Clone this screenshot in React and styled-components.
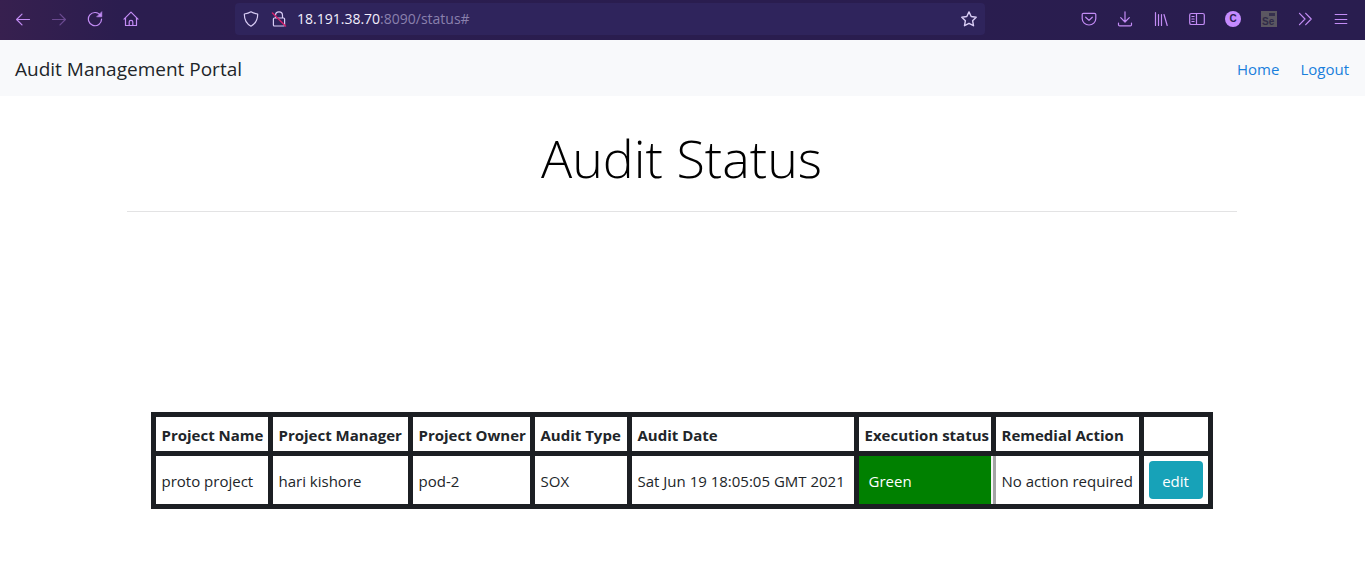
import React from "react";
import styled, { createGlobalStyle } from "styled-components";

const GlobalStyle = createGlobalStyle`
  *, *::before, *::after { box-sizing: border-box; }
  body {
    margin: 0;
    background: #fff;
    color: #212529;
    font-family: "Open Sans", "Noto Sans", sans-serif;
    font-size: 15px;
    line-height: 24px;
  }
`;

const Toolbar = styled.header`
  display: flex;
  align-items: center;
  height: 40px;
  padding: 0 6px 2px 5px;
  background: linear-gradient(90deg, #37204f 0, #2b1d4f 120px, #291d4f 100%);
`;

const ToolGroup = styled.div`
  display: flex;
  flex: none;
`;

const ToolButton = styled.button`
  display: flex;
  align-items: center;
  justify-content: center;
  width: 36px;
  height: 32px;
  padding: 0;
  border: 0;
  background: none;
  color: #c38cf5;
  opacity: ${(p) => (p.disabled ? 0.4 : 1)};
`;

const AddressBar = styled.div`
  display: flex;
  flex: 1;
  align-items: center;
  min-width: 0;
  height: 32px;
  margin: 0 86px;
  padding: 0 8px;
  border-radius: 4px;
  background: #2f245c;
  color: #d9cdf5;
`;

const AddressIcons = styled.div`
  display: flex;
  flex: none;
  gap: 12px;
  margin-right: 10px;
`;

const Host = styled.label`
  flex: none;
  color: #f3effc;
  font-size: 14px;
`;

const AddressInput = styled.input`
  flex: 1;
  min-width: 0;
  padding: 0;
  border: 0;
  outline: 0;
  background: none;
  color: #8a80ad;
  font: inherit;
  font-size: 14px;
`;

const StarButton = styled.button`
  display: flex;
  padding: 0;
  border: 0;
  background: none;
  color: inherit;
`;

const Navbar = styled.nav`
  display: flex;
  align-items: center;
  justify-content: space-between;
  height: 56px;
  padding: 2px 16px 0 15px;
  background: #f8f9fb;
`;

const Brand = styled.a`
  color: #212529;
  font-size: 19px;
  line-height: 26px;
  text-decoration: none;
`;

const NavLinks = styled.div`
  display: flex;
  gap: 21px;
`;

const NavLink = styled.a`
  color: #1a7fdc;
  text-decoration: none;
`;

const Container = styled.main`
  max-width: 1140px;
  margin: 0 auto;
  padding: 0 16px 0 14px;
`;

const Title = styled.h1`
  margin: 0;
  padding: 28px 0 20px;
  border-bottom: 1px solid #e3e3e4;
  color: #000;
  font-size: 52px;
  font-weight: 300;
  line-height: 67px;
  text-align: center;
`;

const AuditTable = styled.table`
  width: 100%;
  max-width: 1062px;
  margin: 200px auto 0;
  table-layout: fixed;
  border-collapse: separate;
  border-spacing: 5px;
  background: #1c1f23;
`;

const Column = styled.col`
  width: ${(p) => p.$width}px;
`;

const HeadCell = styled.th`
  height: 34px;
  padding: 2px 0 0 6px;
  background: #fff;
  font-weight: 700;
  text-align: left;
  white-space: nowrap;
`;

const Cell = styled.td`
  height: 48px;
  padding: 2px 0 0 6px;
  background: #fff;
  white-space: nowrap;
`;

const StatusCell = styled(Cell)`
  padding-left: 10px;
  background: #008000;
  box-shadow: 2px 0 0 #f4f4f4, 5px 0 0 #a3a3a5;
  color: #fff;
`;

const ActionCell = styled(Cell)`
  padding: 0 5px;
`;

const EditButton = styled.button`
  display: block;
  width: 100%;
  height: 38px;
  padding: 2px 0 0;
  border: 0;
  border-radius: 4px;
  background: #17a2b8;
  color: #fff;
  font: inherit;
`;

function Icon({ children, size = 16 }) {
  return (
    <svg
      width={size}
      height={size}
      viewBox="0 0 16 16"
      fill="none"
      stroke="currentColor"
      strokeWidth="1.2"
      strokeLinecap="round"
      strokeLinejoin="round"
      aria-hidden="true"
    >
      {children}
    </svg>
  );
}

const icons = {
  back: <path d="M14.500 8.500H1.600M7 3.100 1.600 8.500 7 13.900" />,
  forward: <path d="M1.500 8.500h12.900M9 3.100l5.400 5.400L9 13.900" />,
  reload: (
    <>
      <path d="M13.600 4.600A6.600 6.600 0 1 0 14.600 8" />
      <path d="M14.800 1v4.800H10z" fill="currentColor" strokeWidth="0.6" />
    </>
  ),
  home: (
    <path d="M1 8.200 8 1.200l7 7M2.500 6.800v7.700h11V6.800M6.200 14.500v-3.400a1.800 1.800 0 0 1 3.600 0v3.400" />
  ),
  shield: (
    <path d="M8 .8C6.200 2 3.800 2.700 1.300 3c0 5.600 1.800 9.600 6.700 12.200C12.900 12.600 14.700 8.600 14.700 3 12.200 2.700 9.800 2 8 .8z" />
  ),
  lock: (
    <>
      <path d="M4.500 7V4.400a3.500 3.500 0 0 1 7 0V7M3.400 7h9.200a1 1 0 0 1 1 1v6a1 1 0 0 1-1 1H3.400a1 1 0 0 1-1-1V8a1 1 0 0 1 1-1z" />
      <path d="M1.500 2 14.500 15" stroke="#d0216b" strokeWidth="1.5" />
    </>
  ),
  star: (
    <path d="m8 .9 2.200 4.600 5 .7-3.600 3.500.9 5L8 12.300l-4.500 2.400.9-5L.8 6.200l5-.7z" strokeWidth="1.4" />
  ),
  pocket: (
    <>
      <path d="M2.500 2.300h11a1.300 1.300 0 0 1 1.300 1.300V7.400a6.800 6.600 0 0 1-13.600 0V3.600a1.300 1.300 0 0 1 1.300-1.300z" />
      <path d="m4.700 6.200 3.300 3.200 3.300-3.200" />
    </>
  ),
  download: (
    <path d="M8 .8v10M3.700 6.700 8 11l4.300-4.300M1.500 12.200v1.500a1.200 1.200 0 0 0 1.200 1.200h10.600a1.200 1.200 0 0 0 1.200-1.200v-1.500" />
  ),
  library: <path d="M2.500 1.500v13M5.500 3.500v11M8.500 3.500v11M11 3.500l3.200 11" />,
  sidebar: (
    <>
      <rect x="0.700" y="2.500" width="14.600" height="11" rx="1.600" />
      <path d="M7.500 2.500v11M2.900 5.500h2.200M2.900 8h2.200M2.900 10.500h2.200" />
    </>
  ),
  more: <path d="m2.500 2.300 5.500 5.700-5.500 5.700M8.700 2.300l5.500 5.700-5.500 5.700" />,
  menu: <path d="M2.200 3.500h11.600M2.200 8.500h11.600M2.200 12.500h11.600" />,
};

const Badge = styled.span`
  width: 16px;
  height: 16px;
  border-radius: 50%;
  background: #c58bff;
  color: #291d4f;
  font: 700 10px/16px "Liberation Sans", sans-serif;
  text-align: center;
`;

const SeleniumTile = styled.span`
  width: 16px;
  height: 16px;
  padding: 6px 0 0 1px;
  background: linear-gradient(#35304d, #35304d) 8px 2px / 6px 3px no-repeat #5b5761;
  color: #302b48;
  font: 700 10px/10px "Liberation Sans", sans-serif;
  text-align: left;
`;

function Tool({ label, icon, disabled, children }) {
  return (
    <ToolButton type="button" aria-label={label} disabled={disabled}>
      {children || <Icon>{icons[icon]}</Icon>}
    </ToolButton>
  );
}

const columns = [
  ["Project Name", 112],
  ["Project Manager", 135],
  ["Project Owner", 117],
  ["Audit Type", 92],
  ["Audit Date", 222],
  ["Execution status", 132],
  ["Remedial Action", 143],
  ["", 64],
];

const audits = [
  {
    project: "proto project",
    manager: "hari kishore",
    owner: "pod-2",
    type: "SOX",
    date: "Sat Jun 19 18:05:05 GMT 2021",
    status: "Green",
    action: "No action required",
  },
];

export default function App() {
  return (
    <>
      <GlobalStyle />
      <Toolbar>
        <ToolGroup>
          <Tool label="Back" icon="back" />
          <Tool label="Forward" icon="forward" disabled />
          <Tool label="Reload" icon="reload" />
          <Tool label="Home page" icon="home" />
        </ToolGroup>
        <AddressBar>
          <AddressIcons>
            <Icon>{icons.shield}</Icon>
            <Icon>{icons.lock}</Icon>
          </AddressIcons>
          <Host htmlFor="address">18.191.38.70</Host>
          <AddressInput id="address" type="text" defaultValue=":8090/status#" />
          <StarButton type="button" aria-label="Bookmark">
            <Icon>{icons.star}</Icon>
          </StarButton>
        </AddressBar>
        <ToolGroup>
          <Tool label="Pocket" icon="pocket" />
          <Tool label="Downloads" icon="download" />
          <Tool label="Library" icon="library" />
          <Tool label="Sidebar" icon="sidebar" />
          <Tool label="Account">
            <Badge>C</Badge>
          </Tool>
          <Tool label="Selenium">
            <SeleniumTile>Se</SeleniumTile>
          </Tool>
          <Tool label="More tools" icon="more" />
          <Tool label="Menu" icon="menu" />
        </ToolGroup>
      </Toolbar>
      <Navbar>
        <Brand href="#">Audit Management Portal</Brand>
        <NavLinks>
          <NavLink href="#">Home</NavLink>
          <NavLink href="#">Logout</NavLink>
        </NavLinks>
      </Navbar>
      <Container>
        <Title>Audit Status</Title>
        <AuditTable>
          <colgroup>
            {columns.map(([name, width]) => (
              <Column key={name} $width={width} />
            ))}
          </colgroup>
          <thead>
            <tr>
              {columns.map(([name]) => (
                <HeadCell key={name} scope="col">
                  {name}
                </HeadCell>
              ))}
            </tr>
          </thead>
          <tbody>
            {audits.map((a) => (
              <tr key={a.project}>
                <Cell>{a.project}</Cell>
                <Cell>{a.manager}</Cell>
                <Cell>{a.owner}</Cell>
                <Cell>{a.type}</Cell>
                <Cell>{a.date}</Cell>
                <StatusCell>{a.status}</StatusCell>
                <Cell>{a.action}</Cell>
                <ActionCell>
                  <EditButton type="button">edit</EditButton>
                </ActionCell>
              </tr>
            ))}
          </tbody>
        </AuditTable>
      </Container>
    </>
  );
}
